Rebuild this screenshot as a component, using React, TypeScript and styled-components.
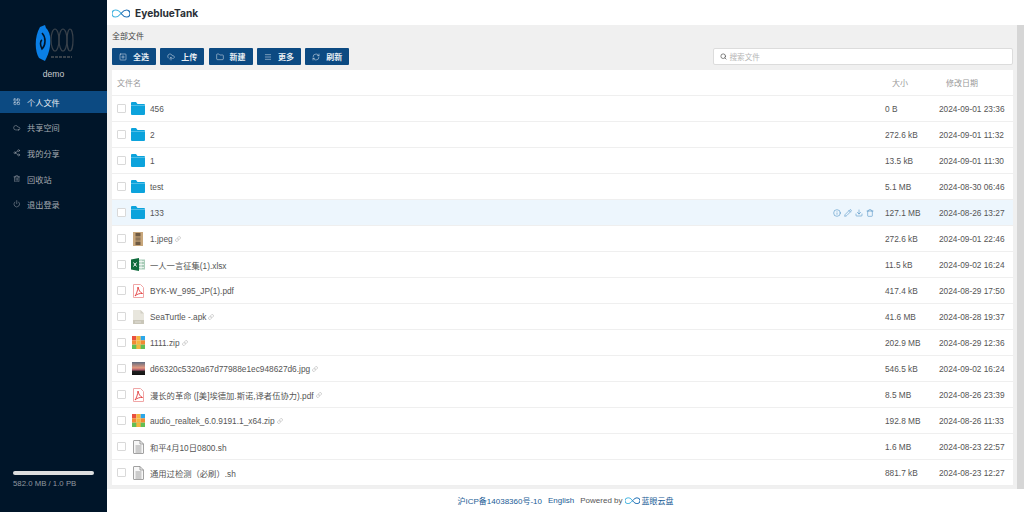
import * as React from 'react';
import styled, {createGlobalStyle} from 'styled-components';
import {
  LayoutGrid, Cloud, Share2, Trash2, Power, SquarePlus, CloudUpload, Folder, Menu, RefreshCw,
  Search, Info, Pencil, Download, Trash, Link,
} from 'lucide-react';

type FileKind = 'folder' | 'film' | 'excel' | 'pdf' | 'apk' | 'zip' | 'photo' | 'text';

type FileRow = {
  name: string
  kind: FileKind
  size: string
  date: string
  shared?: boolean
}

const FONT = `"Liberation Sans", "Noto Sans CJK SC", sans-serif`;

const FILES: FileRow[] = [
  {name: '456', kind: 'folder', size: '0 B', date: '2024-09-01 23:36'},
  {name: '2', kind: 'folder', size: '272.6 kB', date: '2024-09-01 11:32'},
  {name: '1', kind: 'folder', size: '13.5 kB', date: '2024-09-01 11:30'},
  {name: 'test', kind: 'folder', size: '5.1 MB', date: '2024-08-30 06:46'},
  {name: '133', kind: 'folder', size: '127.1 MB', date: '2024-08-26 13:27'},
  {name: '1.jpeg', kind: 'film', size: '272.6 kB', date: '2024-09-01 22:46', shared: true},
  {name: '一人一言征集(1).xlsx', kind: 'excel', size: '11.5 kB', date: '2024-09-02 16:24'},
  {name: 'BYK-W_995_JP(1).pdf', kind: 'pdf', size: '417.4 kB', date: '2024-08-29 17:50'},
  {name: 'SeaTurtle -.apk', kind: 'apk', size: '41.6 MB', date: '2024-08-28 19:37', shared: true},
  {name: '1111.zip', kind: 'zip', size: '202.9 MB', date: '2024-08-29 12:36', shared: true},
  {name: 'd66320c5320a67d77988e1ec948627d6.jpg', kind: 'photo', size: '546.5 kB', date: '2024-09-02 16:24', shared: true},
  {name: '漫长的革命 ([美]埃德加.斯诺,译者伍协力).pdf', kind: 'pdf', size: '8.5 MB', date: '2024-08-26 23:39', shared: true},
  {name: 'audio_realtek_6.0.9191.1_x64.zip', kind: 'zip', size: '192.8 MB', date: '2024-08-26 11:33', shared: true},
  {name: '和平4月10日0800.sh', kind: 'text', size: '1.6 MB', date: '2024-08-23 22:57'},
  {name: '通用过检测（必刷）.sh', kind: 'text', size: '881.7 kB', date: '2024-08-23 12:27'},
];

const MENU = [
  {label: '个人文件', Icon: LayoutGrid},
  {label: '共享空间', Icon: Cloud},
  {label: '我的分享', Icon: Share2},
  {label: '回收站', Icon: Trash2},
  {label: '退出登录', Icon: Power},
];

const ACTIONS = [
  {label: '全选', Icon: SquarePlus},
  {label: '上传', Icon: CloudUpload},
  {label: '新建', Icon: Folder},
  {label: '更多', Icon: Menu},
  {label: '刷新', Icon: RefreshCw},
];

const GlobalStyle = createGlobalStyle`
  html, body {
    margin: 0;
    padding: 0;
    height: 100%;
    overflow: hidden;
    font-family: ${FONT};
  }
  * { box-sizing: border-box; }
`;

const Page = styled.div`
  display: flex;
  width: 1024px;
  height: 512px;
  overflow: hidden;
  background: #fff;
`;

const Sidebar = styled.aside`
  display: flex;
  flex-direction: column;
  flex: 0 0 107px;
  background: #001529;
`;

const Brand = styled.div`
  display: flex;
  flex-direction: column;
  align-items: center;
  padding-top: 25px;
  height: 91px;
`;

const UserName = styled.div`
  margin-top: 6px;
  font-size: 8.6px;
  line-height: 10px;
  color: #c9ccd0;
`;

const MenuList = styled.nav`
  display: flex;
  flex-direction: column;
`;

const MenuItem = styled.div<{$active?: boolean}>`
  display: flex;
  align-items: center;
  gap: 6.5px;
  height: 21.6px;
  margin-bottom: 4px;
  padding-left: 13px;
  font-size: 8.2px;
  color: ${p => (p.$active ? '#e6edf4' : '#a3a9b0')};
  background: ${p => (p.$active ? '#0c4a82' : 'transparent')};
`;

const Storage = styled.div`
  margin-top: auto;
  padding: 0 13px 23px;
`;

const StorageBar = styled.div`
  height: 4px;
  border-radius: 2px;
  background: #dcdedf;
`;

const StorageText = styled.div`
  margin-top: 4px;
  font-size: 7.8px;
  line-height: 10px;
  color: #8f979f;
`;

const Main = styled.main`
  display: flex;
  flex-direction: column;
  flex: 1;
  min-width: 0;
`;

const Header = styled.header`
  display: flex;
  align-items: center;
  gap: 5px;
  height: 24px;
  margin-top: 1px;
  padding-left: 5px;
  background: #fff;
`;

const HeaderTitle = styled.span`
  font-family: Inter, ${FONT};
  font-size: 10.2px;
  font-weight: 700;
  color: #2a2f36;
`;

const Workspace = styled.div`
  display: flex;
  flex: 1;
  min-height: 0;
  background: #f0f0f0;
`;

const Content = styled.div`
  display: flex;
  flex-direction: column;
  flex: 1;
  min-width: 0;
  padding: 6px 4px 0 5px;
`;

const Scrollbar = styled.div`
  flex: 0 0 7px;
  background: #d6d6d6;
`;

const Crumb = styled.div`
  height: 11px;
  font-size: 8px;
  line-height: 11px;
  color: #444;
`;

const Toolbar = styled.div`
  display: flex;
  align-items: center;
  gap: 4.3px;
  margin-top: 6px;
  height: 17px;
`;

const ActionButton = styled.button`
  display: flex;
  align-items: center;
  justify-content: center;
  gap: 6px;
  width: 44px;
  height: 17px;
  padding: 0;
  border: 0;
  border-radius: 1px;
  font-family: ${FONT};
  font-size: 8px;
  font-weight: 700;
  color: #e8eef4;
  background: #0c4a82;
`;

const SearchBox = styled.div`
  display: flex;
  align-items: center;
  gap: 2.5px;
  width: 300px;
  height: 17px;
  margin-left: auto;
  padding-left: 6px;
  border: 1px solid #dcdcdc;
  border-radius: 2px;
  font-size: 7.6px;
  color: #b5b5b5;
  background: #fff;
`;

const Table = styled.div`
  margin-top: 5px;
  background: #fff;
`;

const Row = styled.div<{$hover?: boolean}>`
  display: grid;
  grid-template-columns: 1fr 60px 74px;
  align-items: center;
  height: 26px;
  padding-left: 5px;
  border-bottom: 1px solid #efefef;
  font-size: 8.3px;
  color: #555;
  background: ${p => (p.$hover ? '#edf6fd' : '#fff')};
`;

const HeadRow = styled(Row)`
  color: #999;
  font-size: 8px;
`;

const NameCell = styled.div`
  display: flex;
  align-items: center;
  min-width: 0;
`;

const Checkbox = styled.span`
  flex: 0 0 9px;
  width: 9px;
  height: 9px;
  margin-right: 5px;
  border: 1px solid #d9d9d9;
  border-radius: 1px;
  background: #fff;
`;

const FileIcon = styled.span`
  display: flex;
  align-items: center;
  justify-content: center;
  flex: 0 0 14px;
  width: 14px;
  height: 14px;
  margin-right: 5px;
`;

const LinkMark = styled.span`
  display: inline-flex;
  margin-left: 2px;
  color: #888;
`;

const RowTools = styled.div`
  display: flex;
  align-items: center;
  gap: 3px;
  margin-left: auto;
  margin-right: 5px;
  color: #2a7ab8;
`;

const SizeCell = styled.div`
  padding-left: 6px;
`;

const HeadSize = styled.div`
  padding-left: 13px;
`;

const DateCell = styled.div`
  white-space: nowrap;
`;

const HeadDate = styled.div`
  padding-left: 7px;
`;

const Footer = styled.footer`
  display: flex;
  align-items: center;
  justify-content: center;
  gap: 6px;
  height: 23px;
  font-size: 8px;
  color: #555;
  background: #fff;
  span.link { color: #1a5c96; }
`;

const Powered = styled.span`
  display: inline-flex;
  align-items: center;
  gap: 2px;
`;

const EyeLogo: React.FC<{width: number}> = ({width}) => (
  <svg width={width} height={width / 2} viewBox="0 0 36 18" fill="none" strokeWidth="2.4">
    <path d="M18 9 C14 2 9 2 7 2 A7 7 0 0 0 7 16 C10 16 14 14 18 9" stroke="#43b4e0"/>
    <path d="M18 9 C22 14 26 16 29 16 A7 7 0 0 0 29 2 C26 2 22 4 18 9" stroke="#1f6fb5"/>
  </svg>
);

const SideLogo = () => (
  <svg width="40" height="38" viewBox="0 0 40 38" fill="none">
    <path d="M6 2 L11 0 L12 3 C16 7 17 13 16 21 C15 28 13 32 11 36 L5 33 C1 27 0 12 6 2 Z" fill="#0a7fe6"/>
    <path d="M8 8 C12 12 12 20 8 24 C6 20 6 16 8 15" stroke="#001529" strokeWidth="1.6"/>
    <g stroke="#39424b" strokeWidth="1.2">
      <ellipse cx="21" cy="15" rx="4" ry="11"/>
      <ellipse cx="29" cy="15" rx="4" ry="11"/>
      <ellipse cx="36" cy="15" rx="3" ry="11"/>
      <path d="M17 32 H38" strokeWidth="2" strokeDasharray="3 1"/>
    </g>
  </svg>
);

const KindIcon: React.FC<{kind: FileKind; id: string}> = ({kind, id}) => {
  switch (kind) {
    case 'folder':
      return (
        <svg width="14" height="13" viewBox="0 0 14 13">
          <path d="M0 1 Q0 0 1 0 H5 L6.5 2 H13 Q14 2 14 3 V12 Q14 13 13 13 H1 Q0 13 0 12 Z" fill="#0ca3dc"/>
          <rect y="3.4" width="14" height="0.6" fill="#7fd0ee"/>
        </svg>
      );
    case 'film':
      return (
        <svg width="10" height="14" viewBox="0 0 10 14">
          <rect width="10" height="14" fill="#c8a77c"/>
          <rect x="2.5" y="1" width="5" height="3.4" fill="#6e5a43"/>
          <rect x="2.5" y="5.3" width="5" height="3.4" fill="#8d7558"/>
          <rect x="2.5" y="9.6" width="5" height="3.4" fill="#6e5a43"/>
        </svg>
      );
    case 'excel':
      return (
        <svg width="14" height="13" viewBox="0 0 14 13">
          <rect x="5" y="1.5" width="9" height="10" fill="#a9cdb9"/>
          <path d="M8 3.5 H13 M8 6.5 H13 M8 9.5 H13 M10 2 V11" stroke="#fff" strokeWidth="0.7"/>
          <path d="M0 1.5 L8 0 V13 L0 11.5 Z" fill="#0f6b3c"/>
          <path d="M2.5 4.5 L5.5 8.5 M5.5 4.5 L2.5 8.5" stroke="#fff" strokeWidth="1"/>
        </svg>
      );
    case 'pdf':
      return (
        <svg width="11" height="14" viewBox="0 0 11 14">
          <path d="M0.5 0.5 H7.5 L10.5 3.5 V13.5 H0.5 Z" fill="#fff" stroke="#f0a6a6"/>
          <path d="M5 3 C5.6 6 7 8.5 9.5 9.5 C7 9.2 4 10 2 12 C3.5 10 4.7 6.5 5 3 Z" fill="none" stroke="#e23b3b" strokeWidth="0.9"/>
        </svg>
      );
    case 'apk':
      return (
        <svg width="11" height="14" viewBox="0 0 11 14">
          <path d="M0 0 H7.5 L11 3.5 V14 H0 Z" fill="#e8e6dd"/>
          <path d="M7.5 0 L11 3.5 H7.5 Z" fill="#d2d0c5"/>
          <rect y="10" width="11" height="4" fill="#c9c6b8"/>
          <path d="M2.5 12 H8.5" stroke="#fff" strokeWidth="0.9" strokeDasharray="1 1"/>
        </svg>
      );
    case 'zip':
      return (
        <svg width="13" height="13" viewBox="0 0 13 13">
          <rect width="4.3" height="4.3" fill="#e9503f"/>
          <rect x="4.3" width="4.4" height="4.3" fill="#f4b63f"/>
          <rect x="8.7" width="4.3" height="4.3" fill="#2ba7ea"/>
          <rect y="4.3" width="4.3" height="4.4" fill="#f08a34"/>
          <rect x="4.3" y="4.3" width="4.4" height="4.4" fill="#f4b63f"/>
          <rect x="8.7" y="4.3" width="4.3" height="4.4" fill="#f08a34"/>
          <rect y="8.7" width="13" height="4.3" fill="#62bf55"/>
          <rect x="4.3" y="8.7" width="4.4" height="4.3" fill="#f4b63f"/>
        </svg>
      );
    case 'photo':
      return (
        <svg width="13" height="13" viewBox="0 0 13 13">
          <defs>
            <linearGradient id={id} x1="0" y1="0" x2="0" y2="1">
              <stop offset="0" stopColor="#5f6c80"/>
              <stop offset="0.45" stopColor="#e69a80"/>
              <stop offset="0.62" stopColor="#a8566a"/>
              <stop offset="0.7" stopColor="#222"/>
              <stop offset="1" stopColor="#111"/>
            </linearGradient>
          </defs>
          <rect width="13" height="13" fill={`url(#${id})`}/>
        </svg>
      );
    default:
      return (
        <svg width="11" height="14" viewBox="0 0 11 14" fill="none" stroke="#8c8c8c" strokeWidth="0.8">
          <path d="M0.5 1 Q0.5 0.5 1 0.5 H7 L10.5 4 V13 Q10.5 13.5 10 13.5 H1 Q0.5 13.5 0.5 13 Z" fill="#f7f7f7"/>
          <path d="M7 0.5 V4 H10.5"/>
          <path d="M2.5 6 H8.5 M2.5 8 H8.5 M2.5 10 H8.5 M2.5 12 H8.5"/>
        </svg>
      );
  }
};

const App: React.FC = () => (
  <Page>
    <GlobalStyle/>
    <Sidebar>
      <Brand>
        <SideLogo/>
        <UserName>demo</UserName>
      </Brand>
      <MenuList>
        {MENU.map(({label, Icon}, i) => (
          <MenuItem key={label} $active={i === 0}>
            <Icon size={7.5} strokeWidth={1.6}/>
            {label}
          </MenuItem>
        ))}
      </MenuList>
      <Storage>
        <StorageBar/>
        <StorageText>582.0 MB / 1.0 PB</StorageText>
      </Storage>
    </Sidebar>
    <Main>
      <Header>
        <EyeLogo width={18}/>
        <HeaderTitle>EyeblueTank</HeaderTitle>
      </Header>
      <Workspace>
        <Content>
          <Crumb>全部文件</Crumb>
          <Toolbar>
            {ACTIONS.map(({label, Icon}) => (
              <ActionButton key={label}>
                <Icon size={8} strokeWidth={1.5}/>
                {label}
              </ActionButton>
            ))}
            <SearchBox>
              <Search size={7} strokeWidth={2.4} color="#555"/>
              搜索文件
            </SearchBox>
          </Toolbar>
          <Table>
            <HeadRow>
              <span>文件名</span>
              <HeadSize>大小</HeadSize>
              <HeadDate>修改日期</HeadDate>
            </HeadRow>
            {FILES.map((file, i) => (
              <Row key={file.name} $hover={file.name === '133'}>
                <NameCell>
                  <Checkbox/>
                  <FileIcon><KindIcon kind={file.kind} id={`photo-${i}`}/></FileIcon>
                  {file.name}
                  {file.shared && <LinkMark><Link size={6} strokeWidth={1.5}/></LinkMark>}
                  {file.name === '133' && (
                    <RowTools>
                      <Info size={8} strokeWidth={1.4}/>
                      <Pencil size={8} strokeWidth={1.4}/>
                      <Download size={8} strokeWidth={1.4}/>
                      <Trash size={8} strokeWidth={1.4}/>
                    </RowTools>
                  )}
                </NameCell>
                <SizeCell>{file.size}</SizeCell>
                <DateCell>{file.date}</DateCell>
              </Row>
            ))}
          </Table>
        </Content>
        <Scrollbar/>
      </Workspace>
      <Footer>
        <span className="link">沪ICP备14038360号-10</span>
        <span className="link">English</span>
        <Powered>
          Powered by
          <EyeLogo width={15}/>
          <span className="link">蓝眼云盘</span>
        </Powered>
      </Footer>
    </Main>
  </Page>
);

export default App;
